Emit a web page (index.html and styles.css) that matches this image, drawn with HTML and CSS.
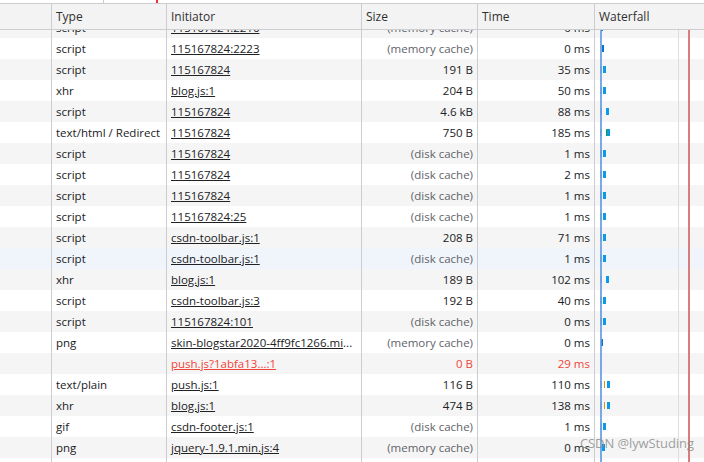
FILE: index.html
```html
<!DOCTYPE html>
<html>
<head>
<meta charset="utf-8">
<link rel="stylesheet" href="styles.css">
</head>
<body>
<div class="panel">
  <div class="strip"><span class="strip-div"></span><span class="strip-red"></span></div>
  <div class="row head">
    <div class="c c0"></div>
    <div class="c c1">Type</div>
    <div class="c c2">Initiator</div>
    <div class="c c3">Size</div>
    <div class="c c4">Time</div>
    <div class="c c5">Waterfall</div>
  </div>
  <div class="body">
    <div class="row g first"><div class="c c0"></div><div class="c c1">script</div><div class="c c2"><u>115167824:2216</u></div><div class="c c3 m">(memory cache)</div><div class="c c4">0 ms</div><div class="c c5"><i class="b dk" style="left:6px"></i></div></div>
    <div class="row"><div class="c c0"></div><div class="c c1">script</div><div class="c c2"><u>115167824:2223</u></div><div class="c c3 m">(memory cache)</div><div class="c c4">0 ms</div><div class="c c5"><i class="b dk" style="left:7px"></i></div></div>
    <div class="row g"><div class="c c0"></div><div class="c c1">script</div><div class="c c2"><u>115167824</u></div><div class="c c3">191 B</div><div class="c c4">35 ms</div><div class="c c5"><i class="t"></i><i class="b" style="left:8px"></i></div></div>
    <div class="row"><div class="c c0"></div><div class="c c1">xhr</div><div class="c c2"><u>blog.js:1</u></div><div class="c c3">204 B</div><div class="c c4">50 ms</div><div class="c c5"><i class="t"></i><i class="b" style="left:8px"></i></div></div>
    <div class="row g"><div class="c c0"></div><div class="c c1">script</div><div class="c c2"><u>115167824</u></div><div class="c c3">4.6 kB</div><div class="c c4">88 ms</div><div class="c c5"><i class="t"></i><i class="b" style="left:11px"></i></div></div>
    <div class="row"><div class="c c0"></div><div class="c c1">text/html / Redirect</div><div class="c c2"><u>115167824</u></div><div class="c c3">750 B</div><div class="c c4">185 ms</div><div class="c c5"><i class="t"></i><i class="gr" style="left:11px"></i><i class="b" style="left:12px"></i></div></div>
    <div class="row g"><div class="c c0"></div><div class="c c1">script</div><div class="c c2"><u>115167824</u></div><div class="c c3 m">(disk cache)</div><div class="c c4">1 ms</div><div class="c c5"><i class="t"></i><i class="b" style="left:8px"></i></div></div>
    <div class="row"><div class="c c0"></div><div class="c c1">script</div><div class="c c2"><u>115167824</u></div><div class="c c3 m">(disk cache)</div><div class="c c4">2 ms</div><div class="c c5"><i class="t"></i><i class="b" style="left:8px"></i></div></div>
    <div class="row g"><div class="c c0"></div><div class="c c1">script</div><div class="c c2"><u>115167824</u></div><div class="c c3 m">(disk cache)</div><div class="c c4">1 ms</div><div class="c c5"><i class="t"></i><i class="b" style="left:8px"></i></div></div>
    <div class="row"><div class="c c0"></div><div class="c c1">script</div><div class="c c2"><u>115167824:25</u></div><div class="c c3 m">(disk cache)</div><div class="c c4">1 ms</div><div class="c c5"><i class="t"></i><i class="b" style="left:8px"></i></div></div>
    <div class="row g"><div class="c c0"></div><div class="c c1">script</div><div class="c c2"><u>csdn-toolbar.js:1</u></div><div class="c c3">208 B</div><div class="c c4">71 ms</div><div class="c c5"><i class="t"></i><i class="b" style="left:8px"></i></div></div>
    <div class="row hv"><div class="c c0"></div><div class="c c1">script</div><div class="c c2"><u>csdn-toolbar.js:1</u></div><div class="c c3 m">(disk cache)</div><div class="c c4">1 ms</div><div class="c c5"><i class="t"></i><i class="b" style="left:8px"></i></div></div>
    <div class="row g"><div class="c c0"></div><div class="c c1">xhr</div><div class="c c2"><u>blog.js:1</u></div><div class="c c3">189 B</div><div class="c c4">102 ms</div><div class="c c5"><i class="t"></i><i class="b" style="left:11px"></i></div></div>
    <div class="row"><div class="c c0"></div><div class="c c1">script</div><div class="c c2"><u>csdn-toolbar.js:3</u></div><div class="c c3">192 B</div><div class="c c4">40 ms</div><div class="c c5"><i class="t"></i><i class="b" style="left:8px"></i></div></div>
    <div class="row g"><div class="c c0"></div><div class="c c1">script</div><div class="c c2"><u>115167824:101</u></div><div class="c c3 m">(disk cache)</div><div class="c c4">0 ms</div><div class="c c5"><i class="t"></i><i class="b" style="left:8px"></i></div></div>
    <div class="row"><div class="c c0"></div><div class="c c1">png</div><div class="c c2"><u>skin-blogstar2020-4ff9fc1266.mi</u>...</div><div class="c c3 m">(memory cache)</div><div class="c c4">0 ms</div><div class="c c5"><i class="b dk" style="left:6px"></i></div></div>
    <div class="row g err"><div class="c c0"></div><div class="c c1"></div><div class="c c2"><u>push.js?1abfa13...:1</u></div><div class="c c3">0 B</div><div class="c c4">29 ms</div><div class="c c5"></div></div>
    <div class="row"><div class="c c0"></div><div class="c c1">text/plain</div><div class="c c2"><u>push.js:1</u></div><div class="c c3">116 B</div><div class="c c4">110 ms</div><div class="c c5"><i class="t"></i><i class="or" style="left:9px"></i><i class="b" style="left:12px"></i></div></div>
    <div class="row g"><div class="c c0"></div><div class="c c1">xhr</div><div class="c c2"><u>blog.js:1</u></div><div class="c c3">474 B</div><div class="c c4">138 ms</div><div class="c c5"><i class="t"></i><i class="or" style="left:9px"></i><i class="b" style="left:12px"></i></div></div>
    <div class="row"><div class="c c0"></div><div class="c c1">gif</div><div class="c c2"><u>csdn-footer.js:1</u></div><div class="c c3 m">(disk cache)</div><div class="c c4">1 ms</div><div class="c c5"><i class="t"></i><i class="b" style="left:8px"></i></div></div>
    <div class="row g"><div class="c c0"></div><div class="c c1">png</div><div class="c c2"><u>jquery-1.9.1.min.js:4</u></div><div class="c c3 m">(memory cache)</div><div class="c c4">0 ms</div><div class="c c5"><i class="b" style="left:7px"></i></div></div>
    <div class="row"><div class="c c0"></div><div class="c c1"></div><div class="c c2"></div><div class="c c3"></div><div class="c c4"></div><div class="c c5"></div></div>
    <span class="vline dcl"></span>
    <span class="vline grid"></span>
    <span class="vline load"></span>
  </div>
  <div class="mark">CSDN @lywStuding</div>
</div>
</body>
</html>
```

FILE: styles.css
```css
html, body {
  margin: 0;
  padding: 0;
  background: #fff;
}
.panel {
  position: relative;
  width: 704px;
  height: 462px;
  overflow: hidden;
  font-family: "Open Sans", "Noto Sans", sans-serif;
  font-size: 11.5px;
  color: #202124;
}
.strip {
  position: relative;
  height: 3px;
  border-bottom: 1px solid #cbcdd1;
  background: #fff;
}
.strip-div {
  position: absolute;
  left: 103px;
  top: 0;
  width: 1px;
  height: 3px;
  background: #cbcdd1;
}
.strip-red {
  position: absolute;
  left: 156px;
  top: 0;
  width: 2px;
  height: 3px;
  background: #e33;
}
.row {
  display: grid;
  grid-template-columns: 51px 115px 195px 116px 117px 110px;
  height: 21px;
  line-height: 22px;
  background: #fff;
}
.row.g { background: #f5f5f5; }
.row.hv { background: #f0f4fb; }
.head {
  height: 25px;
  line-height: 26px;
  background: #f3f3f3;
  border-bottom: 1px solid #cbcdd1;
  color: #303030;
  font-size: 12px;
}
.c {
  box-sizing: border-box;
  border-left: 1px solid #cbcdd1;
  padding: 0 4px;
  white-space: nowrap;
  overflow: hidden;
}
.c0 { border-left: none; }
.body .c3, .body .c4 { text-align: right; padding-right: 4px; }
.c1 { padding-left: 4px; }
.c2 { padding-left: 4px; }
.c5 { position: relative; padding-left: 4px; }
.m { color: #5f6368; }
u { text-decoration: underline; text-underline-offset: 1px; }
.err .c2, .err .c3, .err .c4 { color: #f0443a; }
.body {
  position: relative;
  height: 432px;
  overflow: hidden;
}
.first { margin-top: -13px; }
.c5 i {
  position: absolute;
  top: 7px;
  height: 7px;
}
.c5 .t {
  left: 5px;
  width: 2px;
  background: #c4c7cc;
}
.c5 .b {
  width: 3px;
  background: #0a9be8;
}
.c5 .b.dk { background: #0b76d1; width: 2px; }
.c5 .gr { width: 1px; background: #1b9a4a; }
.c5 .or { width: 1px; background: #d8941c; }
.vline {
  position: absolute;
  top: 0;
  bottom: 0;
}
.dcl { left: 600px; width: 2px; background: rgba(90, 150, 225, 0.8); }
.grid { left: 678px; width: 1px; background: #dedede; }
.load { left: 688px; width: 2px; background: #d97c7c; }
.mark {
  position: absolute;
  left: 580px;
  top: 433px;
  white-space: nowrap;
  font-family: "Open Sans", "Noto Sans", sans-serif;
  font-size: 13px;
  letter-spacing: -0.1px;
  line-height: 20px;
  color: rgba(135, 135, 135, 0.8);
}
```
